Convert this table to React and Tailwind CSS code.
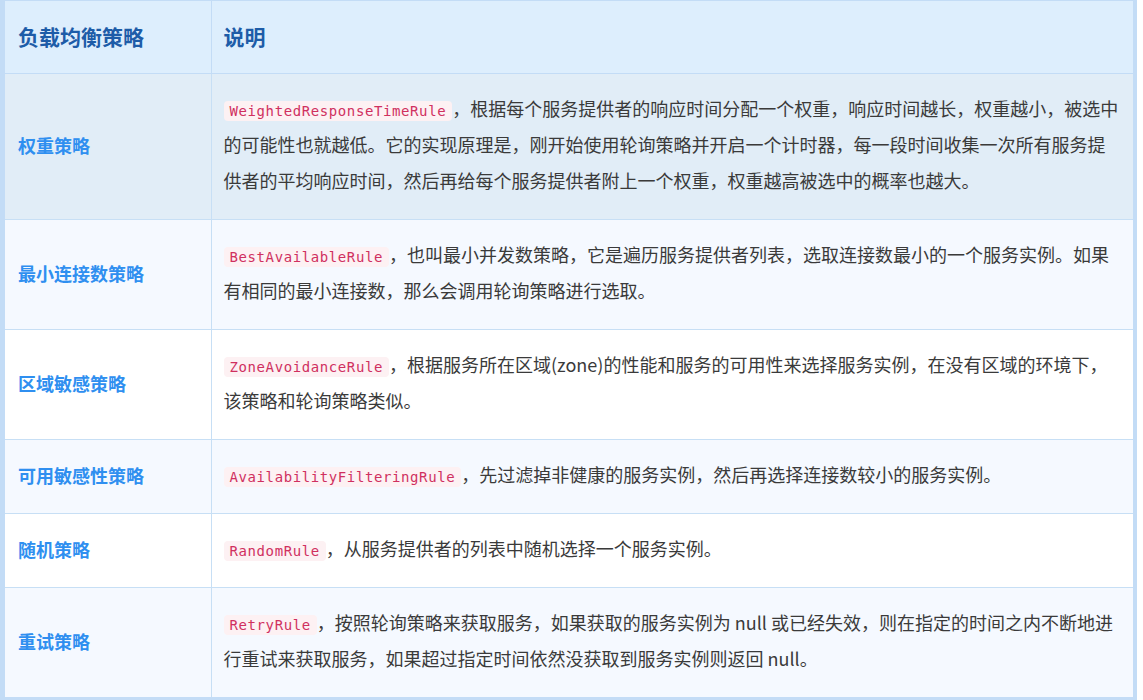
import React from 'react';

const rows = [
  {
    name: '权重策略',
    code: 'WeightedResponseTimeRule',
    lines: [
      '，根据每个服务提供者的响应时间分配一个权重，响应时间越长，权重越小，被选中',
      '的可能性也就越低。它的实现原理是，刚开始使用轮询策略并开启一个计时器，每一段时间收集一次所有服务提',
      '供者的平均响应时间，然后再给每个服务提供者附上一个权重，权重越高被选中的概率也越大。',
    ],
    bg: 'bg-[#e1edf7]',
  },
  {
    name: '最小连接数策略',
    code: 'BestAvailableRule',
    lines: [
      '，也叫最小并发数策略，它是遍历服务提供者列表，选取连接数最小的一个服务实例。如果',
      '有相同的最小连接数，那么会调用轮询策略进行选取。',
    ],
    bg: 'bg-[#f5f9ff]',
  },
  {
    name: '区域敏感策略',
    code: 'ZoneAvoidanceRule',
    lines: [
      '，根据服务所在区域(zone)的性能和服务的可用性来选择服务实例，在没有区域的环境下，',
      '该策略和轮询策略类似。',
    ],
    bg: 'bg-white',
  },
  {
    name: '可用敏感性策略',
    code: 'AvailabilityFilteringRule',
    lines: ['，先过滤掉非健康的服务实例，然后再选择连接数较小的服务实例。'],
    bg: 'bg-[#f5f9ff]',
  },
  {
    name: '随机策略',
    code: 'RandomRule',
    lines: ['，从服务提供者的列表中随机选择一个服务实例。'],
    bg: 'bg-white',
  },
  {
    name: '重试策略',
    code: 'RetryRule',
    lines: [
      '，按照轮询策略来获取服务，如果获取的服务实例为 null 或已经失效，则在指定的时间之内不断地进',
      '行重试来获取服务，如果超过指定时间依然没获取到服务实例则返回 null。',
    ],
    bg: 'bg-[#f5f9ff]',
  },
];

const font = 'font-["Noto_Sans_CJK_SC","Noto_Sans",sans-serif]';

export default function App() {
  return (
    <div className={`w-[1137px] bg-white ${font}`}>
      <div className="border-t border-l-[5px] border-r-4 border-b-4 border-[#c3dcf6]">
        <table className="w-full table-fixed border-collapse">
          <colgroup>
            <col className="w-[206px]" />
            <col />
          </colgroup>
          <thead>
            <tr className="bg-[#ddeefd] border-b border-[#c3dcf6]">
              <th className="border-r border-[#c3dcf6] pl-[13px] pt-[17px] pb-[19px] text-left text-[21px] leading-[36px] font-bold text-[#1d5ca8]">
                负载均衡策略
              </th>
              <th className="pl-3 pt-[17px] pb-[19px] text-left text-[21px] leading-[36px] font-bold text-[#1d5ca8]">
                说明
              </th>
            </tr>
          </thead>
          <tbody>
            {rows.map((r, i) => (
              <tr key={i} className={`${r.bg} ${i < rows.length - 1 ? 'border-b border-[#c7dff5]' : ''}`}>
                <td className="border-r border-[#c7dff5] pl-[13px] pb-[3px] align-middle text-[18px] leading-[36px] font-bold text-[#2f8ff0]">
                  {r.name}
                </td>
                <td className="pl-3 pr-3 pt-[16px] pb-[21px] text-[18px] leading-[36px] text-[#3a3a3a] whitespace-nowrap">
                  <code className="rounded-[4px] bg-[#fdf1f3] px-[6px] py-[2px] font-['DejaVu_Sans_Mono',monospace] text-[14px] leading-5 tracking-[0.6px] text-[#d0305f]">
                    {r.code}
                  </code>
                  {r.lines.map((line, j) => (
                    <React.Fragment key={j}>
                      {j > 0 && <br />}
                      {line}
                    </React.Fragment>
                  ))}
                </td>
              </tr>
            ))}
          </tbody>
        </table>
      </div>
    </div>
  );
}
